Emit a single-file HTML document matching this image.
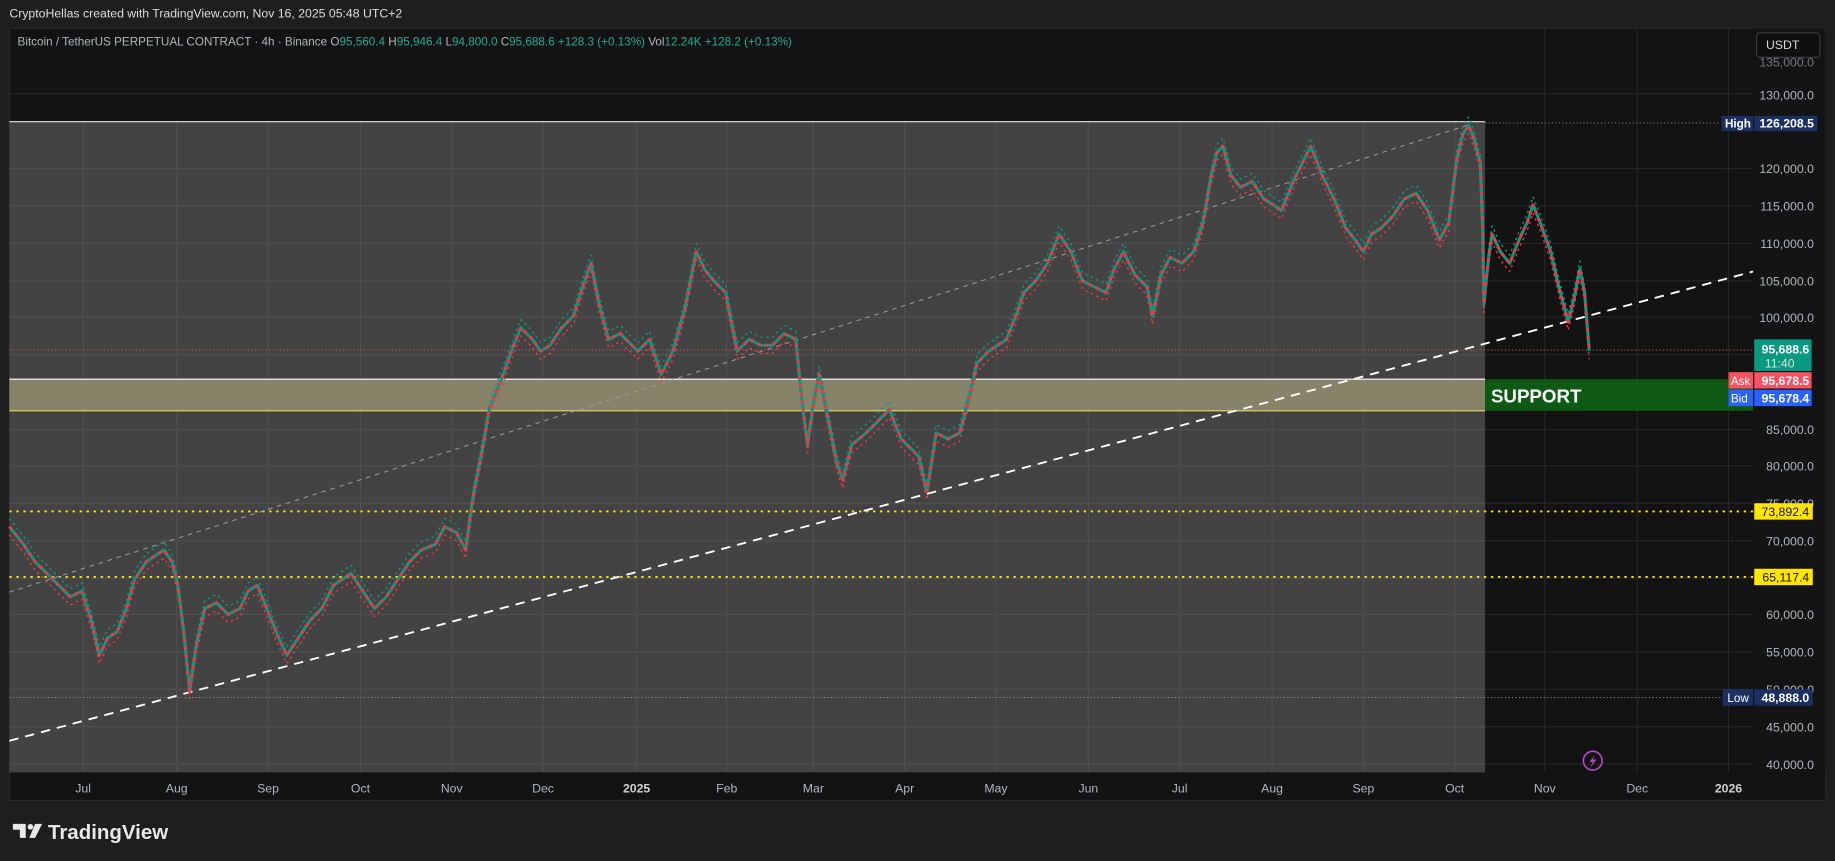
<!DOCTYPE html>
<html><head><meta charset="utf-8"><style>
html,body{margin:0;padding:0;background:#1e1e1e;width:1835px;height:861px;overflow:hidden}
svg{display:block}
text{font-family:"Liberation Sans",sans-serif}
</style></head><body>
<svg width="1835" height="861" viewBox="0 0 1568 735.7" xmlns="http://www.w3.org/2000/svg" xmlns:xlink="http://www.w3.org/1999/xlink">
<rect x="0" y="0" width="1568" height="736" fill="#1e1e1e"/>
<text x="8" y="15" font-size="10.5" fill="#dcdcdc">CryptoHellas created with TradingView.com, Nov 16, 2025 05:48 UTC+2</text>
<rect x="8" y="24" width="1552" height="660" fill="#131313" stroke="#2c2c2c" stroke-width="1"/>
<rect x="1498" y="24" width="62" height="636" fill="#141414"/>
<g stroke="#262626" stroke-width="1">
<line x1="8" y1="80" x2="1498" y2="80"/><line x1="8" y1="144" x2="1498" y2="144"/><line x1="8" y1="176" x2="1498" y2="176"/><line x1="8" y1="208" x2="1498" y2="208"/><line x1="8" y1="240" x2="1498" y2="240"/><line x1="8" y1="271" x2="1498" y2="271"/><line x1="8" y1="303" x2="1498" y2="303"/><line x1="8" y1="367" x2="1498" y2="367"/><line x1="8" y1="398" x2="1498" y2="398"/><line x1="8" y1="430" x2="1498" y2="430"/><line x1="8" y1="462" x2="1498" y2="462"/><line x1="8" y1="494" x2="1498" y2="494"/><line x1="8" y1="525" x2="1498" y2="525"/><line x1="8" y1="557" x2="1498" y2="557"/><line x1="8" y1="589" x2="1498" y2="589"/><line x1="8" y1="621" x2="1498" y2="621"/><line x1="8" y1="653" x2="1498" y2="653"/>
<line x1="1320" y1="24" x2="1320" y2="660"/><line x1="1399" y1="24" x2="1399" y2="660"/><line x1="1477" y1="24" x2="1477" y2="660"/>
</g>
<rect x="8" y="104" width="1261" height="556" fill="#434343"/>
<g stroke="#4f4f4f" stroke-width="1">
<line x1="8" y1="144" x2="1269" y2="144"/><line x1="8" y1="176" x2="1269" y2="176"/><line x1="8" y1="208" x2="1269" y2="208"/><line x1="8" y1="240" x2="1269" y2="240"/><line x1="8" y1="271" x2="1269" y2="271"/><line x1="8" y1="303" x2="1269" y2="303"/><line x1="8" y1="367" x2="1269" y2="367"/><line x1="8" y1="398" x2="1269" y2="398"/><line x1="8" y1="430" x2="1269" y2="430"/><line x1="8" y1="462" x2="1269" y2="462"/><line x1="8" y1="494" x2="1269" y2="494"/><line x1="8" y1="525" x2="1269" y2="525"/><line x1="8" y1="557" x2="1269" y2="557"/><line x1="8" y1="589" x2="1269" y2="589"/><line x1="8" y1="621" x2="1269" y2="621"/><line x1="8" y1="653" x2="1269" y2="653"/>
<line x1="71" y1="104" x2="71" y2="660"/><line x1="151" y1="104" x2="151" y2="660"/><line x1="229" y1="104" x2="229" y2="660"/><line x1="308" y1="104" x2="308" y2="660"/><line x1="386" y1="104" x2="386" y2="660"/><line x1="464" y1="104" x2="464" y2="660"/><line x1="544" y1="104" x2="544" y2="660"/><line x1="621" y1="104" x2="621" y2="660"/><line x1="695" y1="104" x2="695" y2="660"/><line x1="773" y1="104" x2="773" y2="660"/><line x1="851" y1="104" x2="851" y2="660"/><line x1="930" y1="104" x2="930" y2="660"/><line x1="1008" y1="104" x2="1008" y2="660"/><line x1="1087" y1="104" x2="1087" y2="660"/><line x1="1165" y1="104" x2="1165" y2="660"/><line x1="1243" y1="104" x2="1243" y2="660"/>
</g>
<line x1="8" y1="104" x2="1269" y2="104" stroke="#e8e8e8" stroke-width="1"/>
<rect x="8" y="324" width="1261" height="27" fill="#878369"/>
<line x1="8" y1="324" x2="1269" y2="324" stroke="#fff" stroke-width="1"/>
<line x1="8" y1="351" x2="1269" y2="351" stroke="#e6d85a" stroke-width="1"/>
<rect x="1269" y="324" width="229" height="27" fill="#0e5a14"/>
<text x="1274" y="344" font-size="16" font-weight="bold" fill="#fff">SUPPORT</text>
<line x1="8" y1="437" x2="1498" y2="437" stroke="#ffe500" stroke-width="1.6" stroke-dasharray="2 4"/>
<line x1="8" y1="493" x2="1498" y2="493" stroke="#ffe500" stroke-width="1.6" stroke-dasharray="2 4"/>
<line x1="8" y1="596" x2="1470" y2="596" stroke="#888" stroke-width="0.8" stroke-dasharray="1 2"/>
<line x1="1269" y1="105" x2="1470" y2="105" stroke="#888" stroke-width="0.8" stroke-dasharray="1 2"/>
<line x1="8" y1="299" x2="1498" y2="299" stroke="#f7525f" stroke-width="0.9" stroke-dasharray="1 2" opacity="0.8"/>
<line x1="8" y1="506" x2="1257" y2="106" stroke="#999" stroke-width="0.9" stroke-dasharray="4 4"/>
<line x1="8" y1="633" x2="1498" y2="232" stroke="#fff" stroke-width="1.6" stroke-dasharray="8 6"/>
<defs>
<polyline id="p" points="8,450 20,465 30,480 40,490 50,500 60,510 70,505 78,530 85,560 92,545 100,540 108,520 115,495 125,480 140,470 147,480 152,500 157,540 162,590 168,550 175,520 185,515 195,525 205,520 212,505 220,500 228,520 236,540 245,560 255,545 265,530 275,520 285,500 300,490 310,505 320,520 330,510 340,495 350,480 360,470 372,465 380,450 390,455 398,470 402,440 405,420 412,385 418,350 424,335 430,320 437,300 445,280 455,290 462,300 470,295 480,280 490,270 498,245 505,225 512,260 520,290 530,285 545,300 555,290 565,320 575,300 585,265 590,240 595,215 602,230 610,240 620,250 630,300 640,290 650,295 660,295 670,285 680,290 685,340 690,380 695,345 700,320 708,360 715,395 720,410 728,380 740,370 750,360 760,350 770,375 780,385 785,390 792,420 800,370 810,375 820,370 828,340 835,310 845,300 860,290 868,270 875,250 885,240 895,225 905,200 915,215 925,240 935,245 945,250 952,230 960,215 970,235 980,245 985,270 992,235 1000,220 1010,225 1020,215 1028,190 1035,150 1040,130 1045,125 1052,150 1060,160 1070,155 1080,170 1088,175 1095,180 1105,155 1115,135 1120,125 1130,150 1140,170 1150,195 1158,205 1165,215 1172,200 1180,195 1190,185 1200,170 1210,165 1220,180 1230,205 1238,190 1245,135 1250,115 1255,107 1260,120 1265,140 1267,200 1268,260 1272,220 1275,200 1282,215 1290,225 1298,205 1305,190 1310,175 1316,190 1325,215 1332,245 1340,275 1345,255 1350,230 1354,250 1358,300"/>
</defs>
<g fill="none" stroke-linejoin="round">
<use xlink:href="#p" href="#p" stroke="#089981" stroke-width="1.2" transform="translate(0,-7)" stroke-dasharray="2 3"/>
<use xlink:href="#p" href="#p" stroke="#f23645" stroke-width="1.2" transform="translate(0,7)" stroke-dasharray="2 3"/>
<use xlink:href="#p" href="#p" stroke="#089981" stroke-width="2.6"/>
<use xlink:href="#p" href="#p" stroke="#f23645" stroke-width="2.6" stroke-dasharray="3 4"/>
</g>
<g font-size="10.5" fill="#b2b5be" text-anchor="end">
<text x="1550" y="57" opacity="0.6">135,000.0</text>
<text x="1550" y="85">130,000.0</text>
<text x="1550" y="148">120,000.0</text>
<text x="1550" y="180">115,000.0</text>
<text x="1550" y="212">110,000.0</text>
<text x="1550" y="244">105,000.0</text>
<text x="1550" y="275">100,000.0</text>
<text x="1550" y="371">85,000.0</text>
<text x="1550" y="402">80,000.0</text>
<text x="1550" y="434">75,000.0</text>
<text x="1550" y="466">70,000.0</text>
<text x="1550" y="529">60,000.0</text>
<text x="1550" y="561">55,000.0</text>
<text x="1550" y="593">50,000.0</text>
<text x="1550" y="625">45,000.0</text>
<text x="1550" y="657">40,000.0</text>
</g>
<rect x="1501" y="28" width="54" height="21" rx="3" fill="#0f0f0f" stroke="#3a3a3a"/>
<text x="1509" y="42" font-size="10.5" fill="#d8d8d8">USDT</text>
<rect x="1471" y="99" width="27" height="13" fill="#1a3063"/><text x="1474" y="109" font-size="10" font-weight="bold" fill="#fff">High</text>
<rect x="1499" y="99" width="54" height="13" fill="#1a3063"/><text x="1550" y="109" font-size="10.5" font-weight="bold" fill="#fff" text-anchor="end">126,208.5</text>
<rect x="1499" y="290" width="49" height="27" fill="#089981"/><text x="1546" y="302" font-size="10.5" font-weight="bold" fill="#fff" text-anchor="end">95,688.6</text><text x="1508" y="314" font-size="10.5" fill="#e0e0e0">11:40</text>
<rect x="1477" y="318" width="21" height="14" fill="#f7525f"/><text x="1479" y="329" font-size="10" fill="#fff">Ask</text>
<rect x="1499" y="318" width="49" height="14" fill="#f7525f"/><text x="1546" y="329" font-size="10.5" font-weight="bold" fill="#fff" text-anchor="end">95,678.5</text>
<rect x="1477" y="333" width="21" height="14" fill="#2962ff"/><text x="1479" y="344" font-size="10" fill="#fff">Bid</text>
<rect x="1499" y="333" width="49" height="14" fill="#2962ff"/><text x="1546" y="344" font-size="10.5" font-weight="bold" fill="#fff" text-anchor="end">95,678.4</text>
<rect x="1499" y="430" width="50" height="14" fill="#ffe500"/><text x="1546" y="441" font-size="10.5" fill="#111" text-anchor="end">73,892.4</text>
<rect x="1499" y="486" width="50" height="14" fill="#ffe500"/><text x="1546" y="497" font-size="10.5" fill="#111" text-anchor="end">65,117.4</text>
<rect x="1472" y="589" width="26" height="14" fill="#1a3063"/><text x="1476" y="600" font-size="10" fill="#fff">Low</text>
<rect x="1499" y="589" width="50" height="14" fill="#1a3063"/><text x="1546" y="600" font-size="10.5" font-weight="bold" fill="#fff" text-anchor="end">48,888.0</text>
<circle cx="1361" cy="650" r="8" fill="none" stroke="#b04cc8" stroke-width="1.4"/>
<path d="M1363,645 L1358,651 L1361,651 L1359,656 L1364,649 L1361,649 Z" fill="#b04cc8"/>
<g font-size="10.5" fill="#b2b5be" text-anchor="middle">
<text x="71" y="677">Jul</text><text x="151" y="677">Aug</text><text x="229" y="677">Sep</text><text x="308" y="677">Oct</text><text x="386" y="677">Nov</text><text x="464" y="677">Dec</text><text x="544" y="677" font-weight="bold" fill="#d0d0d0">2025</text><text x="621" y="677">Feb</text><text x="695" y="677">Mar</text><text x="773" y="677">Apr</text><text x="851" y="677">May</text><text x="930" y="677">Jun</text><text x="1008" y="677">Jul</text><text x="1087" y="677">Aug</text><text x="1165" y="677">Sep</text><text x="1243" y="677">Oct</text><text x="1320" y="677">Nov</text><text x="1399" y="677">Dec</text><text x="1477" y="677" font-weight="bold" fill="#d0d0d0">2026</text>
</g>
<text x="15" y="39" font-size="10" fill="#b2b5be">Bitcoin / TetherUS PERPETUAL CONTRACT · 4h · Binance <tspan>O</tspan><tspan fill="#22ab94">95,560.4</tspan> <tspan>H</tspan><tspan fill="#22ab94">95,946.4</tspan> <tspan>L</tspan><tspan fill="#22ab94">94,800.0</tspan> <tspan>C</tspan><tspan fill="#22ab94">95,688.6 +128.3 (+0.13%)</tspan> <tspan>Vol</tspan><tspan fill="#22ab94">12.24K</tspan> <tspan fill="#22ab94">+128.2 (+0.13%)</tspan></text>
<path d="M11,704 H22 V716 H17 V709 H11 Z" fill="#e8e8e8"/>
<circle cx="26" cy="706.5" r="2.4" fill="#e8e8e8"/>
<path d="M30,704 H36 L30,716 H25 Z" fill="#e8e8e8"/>
<text x="41" y="717" font-size="17.5" font-weight="bold" fill="#e8e8e8">TradingView</text>
</svg>
</body></html>
